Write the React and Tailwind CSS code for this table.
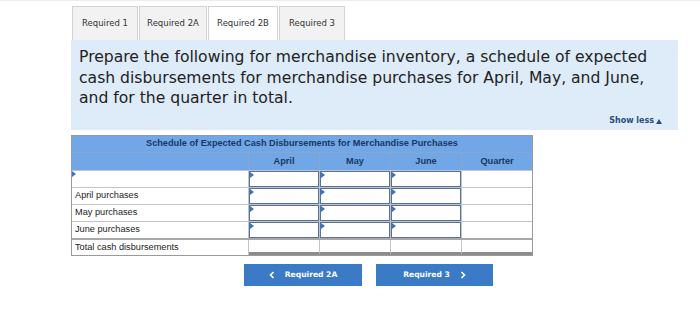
import React from 'react';

const tabs = [
  { label: 'Required 1', w: 'w-[66px]' },
  { label: 'Required 2A', w: 'w-[68px]' },
  { label: 'Required 2B', w: 'w-[70px]', active: true },
  { label: 'Required 3', w: 'w-[66px]' },
];

const rows = [
  { label: '', input: true },
  { label: 'April purchases', input: true },
  { label: 'May purchases', input: true },
  { label: 'June purchases', input: true },
  { label: 'Total cash disbursements', total: true },
];

// small blue flag drawn in the corner of editable cells
const Flag = () => (
  <span className="absolute left-0 top-0 w-0 h-0 border-t-[3px] border-b-[3px] border-l-[4px] border-t-transparent border-b-transparent border-l-[#3f73b8]" />
);

const InputCell = () => (
  <div className="relative h-full border border-[#55729f]">
    <Flag />
  </div>
);

const Chevron = ({ dir }) => (
  <svg width="6" height="8" viewBox="0 0 6 8" className="shrink-0">
    <path
      d={dir === 'left' ? 'M4.5 1 L1.5 4 L4.5 7' : 'M1.5 1 L4.5 4 L1.5 7'}
      fill="none"
      stroke="white"
      strokeWidth="1.6"
    />
  </svg>
);

export default function App() {
  return (
    <div className="w-[700px] h-[336px] bg-white overflow-hidden border-t border-[#ececec]">
      {/* ── Tabs ── */}
      <div className="flex gap-[1px] pl-[72px] pt-[5px]">
        {tabs.map((t) => (
          <div
            key={t.label}
            className={`${t.w} h-[34px] flex items-center justify-center border border-b-0 border-[#d3d3d3] text-[8.5px] text-[#333] ${
              t.active ? 'bg-white' : 'bg-[#f2f2f2]'
            }`}
            style={{ fontFamily: '"DejaVu Sans", Verdana, sans-serif' }}
          >
            {t.label}
          </div>
        ))}
      </div>

      {/* ── Prompt panel ── */}
      <div className="ml-[71px] w-[607px] h-[90px] bg-[#deebf8] pl-[8px] pr-[14px] pt-[7px] relative">
        <p
          className="text-[15.6px] leading-[20.5px] text-[#222]"
          style={{ fontFamily: '"DejaVu Sans", Verdana, sans-serif' }}
        >
          Prepare the following for merchandise inventory, a schedule of expected cash disbursements for merchandise purchases for April, May, and June, and for the quarter in total.
        </p>
        <div
          className="absolute right-[16px] bottom-[3px] flex items-center gap-[2px] text-[8px] font-bold text-[#2a4f7f]"
          style={{ fontFamily: '"DejaVu Sans", Verdana, sans-serif' }}
        >
          Show less
          <span className="w-0 h-0 border-l-[3px] border-r-[3px] border-b-[5px] border-l-transparent border-r-transparent border-b-[#2a4f7f]" />
        </div>
      </div>

      {/* ── Schedule table ── */}
      <div
        className="ml-[71px] mt-[5px] w-[462px] border border-[#9a9a9a]"
        style={{ fontFamily: '"Liberation Sans", Arial, sans-serif' }}
      >
        <div className="h-[17px] bg-[#71a7e6] flex items-center justify-center text-[9.2px] font-bold text-[#1b3762] border-b border-[#8aa6c8]">
          Schedule of Expected Cash Disbursements for Merchandise Purchases
        </div>
        <div className="grid grid-cols-[177px_71px_71px_71px_1fr] h-[17px] bg-[#71a7e6] text-[9.2px] font-bold text-[#1b3762]">
          <div className="border-r border-[#8aa6c8]" />
          <div className="flex items-center justify-center border-r border-[#8aa6c8]">April</div>
          <div className="flex items-center justify-center border-r border-[#8aa6c8]">May</div>
          <div className="flex items-center justify-center border-r border-[#8aa6c8]">June</div>
          <div className="flex items-center justify-center">Quarter</div>
        </div>
        {rows.map((r, i) => (
          <div
            key={i}
            className={`grid grid-cols-[177px_71px_71px_71px_1fr] h-[17px] text-[9.2px] text-[#222] ${
              r.total ? 'border-t-2 border-[#a8a8a8]' : 'border-t border-[#c4c4c4]'
            }`}
          >
            <div className="relative flex items-center pl-[3px] border-r border-[#c4c4c4]">
              {i === 0 && <Flag />}
              {r.label}
            </div>
            {[0, 1, 2].map((c) => (
              <div key={c} className={`border-r border-[#c4c4c4] ${r.total ? 'border-b-[3px] border-b-[#8c8c8c]' : ''}`}>
                {r.input && <InputCell />}
              </div>
            ))}
            <div className={r.total ? 'border-b-[3px] border-[#8c8c8c]' : ''} />
          </div>
        ))}
      </div>

      {/* ── Navigation ── */}
      <div
        className="flex gap-[14px] ml-[244px] mt-[8px] text-[7.6px] font-bold text-white"
        style={{ fontFamily: '"DejaVu Sans", Verdana, sans-serif' }}
      >
        <button className="w-[118px] h-[22px] bg-[#3b7bc6] flex items-center justify-center gap-[10px]">
          <Chevron dir="left" />
          Required 2A
        </button>
        <button className="w-[117px] h-[22px] bg-[#3b7bc6] flex items-center justify-center gap-[10px]">
          Required 3
          <Chevron dir="right" />
        </button>
      </div>
    </div>
  );
}
